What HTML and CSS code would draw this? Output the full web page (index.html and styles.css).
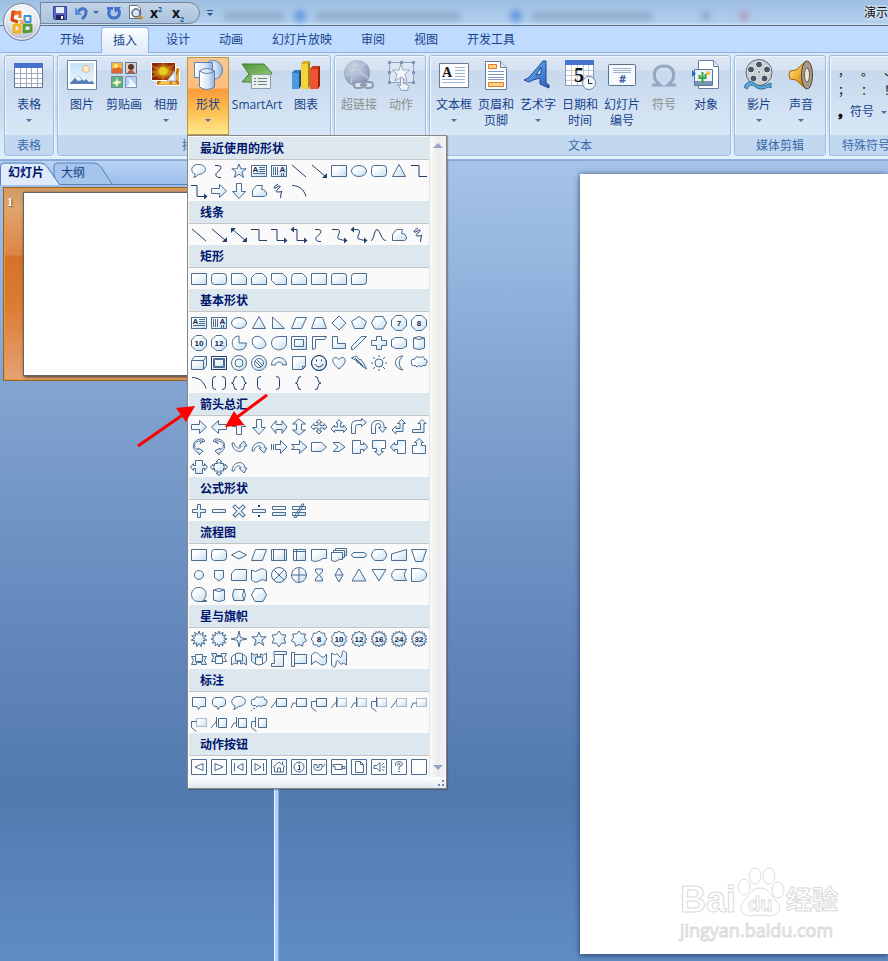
FILE: index.html
```html
<!DOCTYPE html>
<html lang="zh-CN">
<head>
<meta charset="utf-8">
<title>演示文稿</title>
<link rel="stylesheet" href="styles.css">
</head>
<body>
<svg class="defs" width="0" height="0" aria-hidden="true">
  <defs>
    <linearGradient id="tint" x1="0" y1="0" x2="1" y2="1"><stop offset=".3" stop-color="#fdfeff"/><stop offset="1" stop-color="#c3ddf0"/></linearGradient>
    <linearGradient id="steel" x1="0" y1="0" x2="1" y2="0"><stop offset="0" stop-color="#fff"/><stop offset=".6" stop-color="#d5e4f5"/><stop offset="1" stop-color="#94b2da"/></linearGradient>
    <linearGradient id="sky" x1="0" y1="0" x2="0" y2="1"><stop offset="0" stop-color="#c3e3fb"/><stop offset="1" stop-color="#eaf6ff"/></linearGradient>
    <linearGradient id="green" x1="0" y1="0" x2="1" y2="1"><stop offset="0" stop-color="#55943f"/><stop offset="1" stop-color="#9bd078"/></linearGradient>
    <linearGradient id="gold" x1="0" y1="0" x2="1" y2="1"><stop offset="0" stop-color="#ffe9a0"/><stop offset=".5" stop-color="#efb335"/><stop offset="1" stop-color="#a86a10"/></linearGradient>
    <linearGradient id="blue" x1="0" y1="0" x2="1" y2="1"><stop offset="0" stop-color="#7cb6f4"/><stop offset="1" stop-color="#2560bd"/></linearGradient>
    <radialGradient id="orb" cx=".5" cy=".3" r=".7"><stop offset="0" stop-color="#fff"/><stop offset=".6" stop-color="#e3e7ee"/><stop offset="1" stop-color="#a7b2c4"/></radialGradient>
    <radialGradient id="globe" cx=".4" cy=".3" r=".7"><stop offset="0" stop-color="#d5dcea"/><stop offset="1" stop-color="#8493b3"/></radialGradient>
    <radialGradient id="flower"><stop offset=".25" stop-color="#f3dc22"/><stop offset=".5" stop-color="#c87a14"/><stop offset="1" stop-color="#8e2508"/></radialGradient>
  </defs>
</svg>

<header class="titlebar">
  <button class="orb" aria-label="Office">
    <svg width="40" height="40" viewBox="0 0 40 40">
      <circle cx="20" cy="20" r="18.5" fill="url(#orb)" stroke="#7785a0"/>
      <circle cx="20" cy="20" r="17" fill="none" stroke="#fff"/>
      <g fill="none" stroke-width="3" stroke-linejoin="round">
        <path d="M17 11l-6-1-1 8 6 2" stroke="#d9430e"/><path d="M12 12l6-2v6" stroke="#ef7420"/>
        <path d="M22.500 18v-4h6v6h-5z" stroke="#3b8fd6" stroke-width="2"/>
        <path d="M12 23h6v7h-6z" stroke="#f2b21b"/>
        <path d="M22 23h7v6l-7 1z" stroke="#5a9a3a"/>
        <path d="M18 18l4 4m0-4l-4 4" stroke="#f39a4d" stroke-width="2" stroke-dasharray="2 1"/>
      </g>
    </svg>
  </button>
  <nav class="quick" aria-label="快速访问工具栏">
    <button aria-label="保存"><svg width="16" height="16" viewBox="0 0 16 16"><path d="M1.500 1.500h13v13h-12l-1-1z" fill="#5d63c4" stroke="#37409b"/><path d="M4 2h8v6H4z" fill="#e4eefb"/><path d="M4 10h8v5H4z" fill="#24265e"/><path d="M9 11h2v3H9z" fill="#fff"/></svg></button>
    <button aria-label="撤消"><svg width="26" height="16" viewBox="0 0 26 16"><path d="M4 7c3-5 9-4 8 1 0 3-2 4-4 6" fill="none" stroke="#4672c8" stroke-width="3"/><path d="M1 2v8h7z" fill="#5e8cda"/><path d="M19 6h6l-3 3z" fill="#3768a8"/></svg></button>
    <button aria-label="重复"><svg width="16" height="16" viewBox="0 0 16 16"><path d="M4 5C1 9 4 13 8 13c5 0 7-5 4-9" fill="none" stroke="#3f72cc" stroke-width="3"/><path d="M8 2h7L9 8zM1 2h6v3H1z" fill="#3f72cc"/></svg></button>
    <button aria-label="打印预览"><svg width="16" height="16" viewBox="0 0 16 16"><path d="M1.500.5h8l3 3v10h-11z" fill="#fff" stroke="#68717f"/><circle cx="8" cy="8" r="4" fill="#cfe7f8" stroke="#59636f" stroke-width="1.500"/><path d="M11 11l3 3" stroke="#d28a1c" stroke-width="3"/></svg></button>
    <button class="script" aria-label="上标">x<sup>2</sup></button>
    <button class="script" aria-label="下标">x<sub>2</sub></button>
  </nav>
  <button class="more" aria-label="自定义"><svg width="8" height="8" viewBox="0 0 8 8"><path d="M1 1.500h6" stroke="#2b4f86"/><path d="M1 4h6L4 7z" fill="#2b4f86"/></svg></button>
  <div class="backdrop" aria-hidden="true"><i class="smear"></i><i class="dot"></i><i class="smear long"></i><i class="dot"></i><i class="smear"></i><i class="tick"></i><i class="tick red"></i></div>
  <h1 class="doc">演示文稿</h1>
</header>

<nav class="tabs">
  <button>开始</button><button class="on">插入</button><button>设计</button><button>动画</button><button>幻灯片放映</button><button>审阅</button><button>视图</button><button>开发工具</button>
</nav>

<section class="ribbon">
  <div class="group">
    <div class="tools">
      <button class="tool"><svg class="ico" viewBox="0 0 32 32"><path d="M1.500 4.500h28v24h-28z" fill="#fff" stroke="#5f7594"/><path d="M1 4h29v5H1z" fill="#4471cf"/><path d="M2 14.500h27M2 19.500h27M2 24.500h27M7.500 9v19M13.500 9v19M18.500 9v19M24.500 9v19" stroke="#a0acbe"/></svg><span>表格</span><i class="caret"></i></button>
    </div>
    <h2>表格</h2>
  </div>
  <div class="group">
    <div class="tools">
      <button class="tool"><svg class="ico" viewBox="0 0 32 32"><path d="M1.500 1.500h29v29h-29z" fill="#fff" stroke="#6580a4"/><path d="M4 4h24v20H4z" fill="url(#sky)"/><circle cx="20" cy="10" r="3.500" fill="#fff0ce" stroke="#f3a775"/><path d="M4 24l8-8 6 6 4-4 6 6v1H4z" fill="#557fb4"/><path d="M9 19l3-3 4 5-4 1zM20 20l2-2 4 4-3 1z" fill="#eaf3fc"/></svg><span>图片</span></button>
      <button class="tool"><svg class="ico" viewBox="0 0 32 32"><path d="M3.500 3.500h11v11h-11z" fill="#f8b640" stroke="#8a9ab4"/><path d="M4 10l6-2 4 2v4H4z" fill="#e4672a"/><circle cx="8" cy="7" r="2" fill="#fff27a"/><path d="M17.500 3.500h11v11h-11z" fill="#dcd5cd" stroke="#66758b"/><circle cx="23" cy="8" r="3" fill="#5f3426"/><path d="M19 14q4-6 8 0z" fill="#c35232"/><path d="M3.500 17.500h11v11h-11z" fill="#5cb586" stroke="#6d8f8c"/><path d="M9 18l1 4 4 1-4 2-1 3-2-3-3-1 4-2z" fill="#fbf7b5"/><path d="M17.500 17.500h11v11h-11z" fill="#b5d1f3" stroke="#7e93b9"/><path d="M20 18l8 8v2H18l4-4z" fill="#eff6ff"/></svg><span>剪贴画</span></button>
      <button class="tool"><svg class="ico" viewBox="0 0 32 32"><path d="M6.500 8.500h23v18h-23z" fill="#e2a33d" stroke="#fff"/><path d="M7 25L18 14l11 11M20 25l9-15" stroke="#c06a18" stroke-width="2" fill="#f1c65c"/><path d="M1.500 3.500h24v18h-24z" fill="url(#flower)" stroke="#fff"/><path d="M13 4v17M2 7l22 11M2 18L24 6M2 13h22" stroke="#d18c22"/><circle cx="13" cy="12" r="4" fill="#e6cf18"/><path d="M25 12l-8 10h8z" fill="#eef1f5" stroke="#a5abb5"/></svg><span>相册</span><i class="caret"></i></button>
      <div class="drop">
        <button class="tool active" aria-expanded="true"><svg class="ico" viewBox="0 0 32 32"><circle cx="21" cy="11" r="9.500" fill="url(#steel)" stroke="#5b81b5"/><path d="M2.500 3.500h18v15h-18z" fill="url(#steel)" stroke="#5b81b5"/><path d="M7.500 12q7.500-5 15 0v16q-7.500 5-15 0z" fill="url(#steel)" stroke="#5b81b5"/><path d="M7.500 12q7.500 5 15 0" fill="none" stroke="#5b81b5"/></svg><span>形状</span><i class="caret"></i></button>
        <div class="menu">
          <div class="list">
            <h3>最近使用的形状</h3><div class="grid" data-set="recent"></div>
            <h3>线条</h3><div class="grid" data-set="lines"></div>
            <h3>矩形</h3><div class="grid" data-set="rects"></div>
            <h3>基本形状</h3><div class="grid" data-set="basic"></div>
            <h3>箭头总汇</h3><div class="grid" data-set="arrows"></div>
            <h3>公式形状</h3><div class="grid" data-set="math"></div>
            <h3>流程图</h3><div class="grid" data-set="flow"></div>
            <h3>星与旗帜</h3><div class="grid" data-set="stars"></div>
            <h3>标注</h3><div class="grid" data-set="callouts"></div>
            <h3>动作按钮</h3><div class="grid" data-set="actions"></div>
          </div>
          <div class="scroll"><button class="up" aria-label="向上"></button><button class="down" aria-label="向下"></button></div>
          <div class="grip"><svg width="8" height="8" viewBox="0 0 8 8" fill="#6f88b5"><path d="M5 1h2v2H5zM5 5h2v2H5zM1 5h2v2H1z"/></svg></div>
          <svg class="marks" width="132" height="56" viewBox="0 0 132 56" aria-hidden="true"><g stroke="#fe0000" stroke-width="3"><path d="M1 53L47 21M130 2L99 25"/></g><g fill="#fe0000"><path d="M58 13L49 29 39 15zM88 34L97 18 107 32z"/></g></svg>
        </div>
      </div>
      <button class="tool smart"><svg class="ico" viewBox="0 0 32 32"><path d="M1 5h22l8 9-7 9H1l7-8z" fill="url(#green)" stroke="#427f35"/><path d="M10.500 15.500h19v14h-19z" fill="#eef4f2" fill-opacity=".9" stroke="#8d9dae"/><path d="M13 19.500h2m2 0h9M13 22.500h2m2 0h9M13 25.500h2m2 0h9" stroke="#6b8294"/></svg><span>SmartArt</span></button>
      <button class="tool"><svg class="ico" viewBox="0 0 32 32"><path d="M2 14l3-3h6v16l-2 3H2z" fill="#1c477f"/><path d="M2 14h7v16H2z" fill="#4a9ade"/><path d="M2 14l3-3h6l-2 3z" fill="#2e79c2"/><path d="M11 5l3-3h6v25l-2 3h-7z" fill="#a8820c"/><path d="M11 5h7v25h-7z" fill="#f5d33a"/><path d="M11 5l3-3h6l-2 3z" fill="#d5b024"/><path d="M20 10l3-3h7v20l-2 3h-8z" fill="#9a1e08"/><path d="M20 10h8v20h-8z" fill="#ed5433"/><path d="M20 10l3-3h7l-2 3z" fill="#c83b1c"/></svg><span>图表</span></button>
    </div>
    <h2>插图</h2>
  </div>
  <div class="group">
    <div class="tools">
      <button class="tool" disabled><svg class="ico" viewBox="0 0 32 32"><circle cx="14" cy="14" r="13" fill="url(#globe)"/><path d="M4 8q10 2 18-3M8 24q0-12 13-20M3 17q12-8 22 2" fill="none" stroke="#b9c4d8" stroke-width="2"/><g fill="none" stroke="#8e9ab2" stroke-width="2"><rect x="11" y="23" width="9" height="6" rx="3" fill="#dbe3ef"/><rect x="21" y="23" width="9" height="6" rx="3" fill="#dbe3ef"/><path d="M17 26h7"/></g></svg><span>超链接</span></button>
      <button class="tool" disabled><svg class="ico" viewBox="0 0 32 32"><path d="M4.500 3.500h24v20h-24z" fill="#dde6f3" stroke="#93a2bd"/><path d="M16 5l2 6h7l-5 4 2 7-6-4-6 4 2-7-5-4h7z" fill="#f1f5fa" stroke="#9aa9c0"/><path d="M3 2h3v3H3zM15 2h3v3h-3zM27 2h3v3h-3zM3 12h3v3H3zM27 12h3v3h-3zM3 22h3v3H3zM27 22h3v3h-3z" fill="#8495b7"/><path d="M15.500 19.500q1.500-2 3 0v5l4 1 1 2-1 4h-6l-4-6 3 1z" fill="#edf1f7" stroke="#91a0b8"/></svg><span>动作</span></button>
    </div>
    <h2>链接</h2>
  </div>
  <div class="group">
    <div class="tools">
      <button class="tool"><svg class="ico" viewBox="0 0 32 32"><path d="M1.500 4.500h29v24h-29z" fill="#fff" stroke="#6c7c94"/><path d="M17 8.500h10M17 11.500h10M17 14.500h10M17 17.500h10M4 20.500h23M4 23.500h23" stroke="#9fb4d8"/><text x="4" y="18" class="serif" font-size="14">A</text></svg><span>文本框</span><i class="caret"></i></button>
      <button class="tool"><svg class="ico" viewBox="0 0 32 32"><path d="M5.500 2.500h15l6 6v22h-21z" fill="#fff" stroke="#677e9e"/><path d="M20.500 2.500v6h6" fill="#dfe9f6" stroke="#677e9e"/><path d="M8.500 5.500h8v4h-8zM8.500 23.500h15v4h-15z" fill="#ffd691" stroke="#e67817"/><path d="M8 12.500h16M8 15.500h16M8 18.500h16M8 20.500h16" stroke="#8299c2"/></svg><span>页眉和<br>页脚</span></button>
      <button class="tool"><svg class="ico" viewBox="0 0 32 32"><path d="M2 21q4-1 8-6L21 2h3l0 22 3 2v3l-9-4V19l-7 2-4 2zM14 16l5-1V8z" fill="url(#blue)" fill-rule="evenodd" stroke="#1d4a94"/></svg><span>艺术字</span><i class="caret"></i></button>
      <button class="tool"><svg class="ico" viewBox="0 0 32 32"><path d="M1.500 2.500h28v24h-28z" fill="#fff" stroke="#8a9ab6"/><path d="M1 1h29v5H1z" fill="#4774d1"/><path d="M2 11.500h27M2 16.500h27M2 21.500h27M7.500 6v20M13.500 6v20M19.500 6v20M24.500 6v20" stroke="#c3cbd8"/><text x="10" y="23" class="serif" font-size="20">5</text><circle cx="25" cy="24" r="6.500" fill="#f4f9ff" stroke="#6e7f99"/><path d="M24.500 20v4.500h4" fill="none" stroke="#222"/></svg><span>日期和<br>时间</span></button>
      <button class="tool"><svg class="ico" viewBox="0 0 32 32"><rect x="2.500" y="5.500" width="27" height="21" rx="1" fill="#f6f9fd" stroke="#5d7089"/><path d="M7 9.500h18M7 11.500h18M7 13.500h18" stroke="#a6b3c8"/><text x="13" y="24" font-size="11" font-weight="bold" fill="#3a5fa5">#</text></svg><span>幻灯片<br>编号</span></button>
      <button class="tool" disabled><svg class="ico" viewBox="0 0 32 32"><path d="M4 26h8c-9-7-7-19 4-19s13 12 4 19h8" fill="none" stroke="#94a4c1" stroke-width="3"/></svg><span>符号</span></button>
      <button class="tool"><svg class="ico" viewBox="0 0 32 32"><path d="M8.500 1.500h15l5 6v22h-20z" fill="#fff" stroke="#677e9e"/><path d="M23.500 1.500v6h5" fill="#dfe9f6" stroke="#677e9e"/><path d="M4.500 10.500h18v16h-18z" fill="#e9f3fb" stroke="#54779e"/><path d="M5 22h17v4H5z" fill="#7895b5"/><circle cx="18" cy="14" r="2" fill="#f3bc34"/><path d="M2 11v7l4-3.500z" fill="#276bc9"/><path d="M12.500 24V13M9.500 16v3h6v-4" fill="none" stroke="#35a03c" stroke-width="2"/></svg><span>对象</span></button>
    </div>
    <h2>文本</h2>
  </div>
  <div class="group">
    <div class="tools">
      <button class="tool"><svg class="ico" viewBox="0 0 32 32"><circle cx="16" cy="13.500" r="13" fill="#c9ced5" stroke="#5e6672"/><g fill="#485564" stroke="#f1f3f5"><circle cx="16" cy="5.500" r="3.500"/><circle cx="24" cy="10.500" r="3.500"/><circle cx="21.500" cy="19.500" r="3.500"/><circle cx="10.500" cy="19.500" r="3.500"/><circle cx="8" cy="10.500" r="3.500"/><circle cx="16" cy="13" r="1.500"/></g><path d="M1 28q4-8 10-4t9 3 8-3v5q-3-2-5 0-6 3-12-2-4-3-7 3z" fill="#5baad9" stroke="#2b709e"/></svg><span>影片</span><i class="caret"></i></button>
      <button class="tool"><svg class="ico" viewBox="0 0 32 32"><path d="M5 12l6-1 10-9q-4 14 0 28l-10-9-6-1q-2-4 0-8z" fill="url(#gold)" stroke="#9d6511"/><ellipse cx="22" cy="16" rx="5.500" ry="14" fill="#a59a8b" stroke="#564734"/><ellipse cx="22" cy="16" rx="2.500" ry="7" fill="#eee5d3" stroke="#6d5f4b"/></svg><span>声音</span><i class="caret"></i></button>
    </div>
    <h2>媒体剪辑</h2>
  </div>
  <div class="group special">
    <div class="tools marksgrid">
      <button>，</button><button>。</button><button>、</button>
      <button>；</button><button>：</button><button>！</button>
      <button class="sym"><b>❟</b>符号<i class="caret"></i></button>
    </div>
    <h2>特殊符号</h2>
  </div>
</section>

<main class="work">
  <aside class="pane">
    <div class="panetabs">
      <svg class="edges" width="274" height="24" viewBox="0 0 274 24" aria-hidden="true"><path d="M54 23V5q0-3 4-3h36q4 0 7 4l11 17" fill="#a5c5ed" stroke="#5583bd"/><path d="M0.500 24V5q0-3 4-3h36q4 0 7 4l12 17.500h214" fill="none" stroke="#5583bd"/><path d="M1 24V6q0-3 4-3h35q4 0 7 4l12 17z" fill="#dfeafa"/></svg>
      <button class="sel">幻灯片</button><button>大纲</button>
    </div>
    <div class="thumb"><span>1</span><div class="mini"></div></div>
  </aside>
  <div class="divider"></div>
  <section class="stage">
    <article class="slide">
      <div class="watermark">
        <div class="brand"><span>Bai</span><svg width="50" height="54" viewBox="0 0 50 54" fill="#fff" stroke="#dcdcdc"><ellipse cx="8" cy="21" rx="6" ry="8"/><ellipse cx="19" cy="10" rx="6" ry="8"/><ellipse cx="33" cy="10" rx="6" ry="8"/><ellipse cx="42" cy="24" rx="6" ry="8"/><path d="M24 22C15 22 13 31 7 36C2 43 6 50 15 50Q24 48 33 50C43 50 47 42 41 36C35 30 33 22 24 22z"/><text x="12" y="45" font-size="20">du</text></svg><span class="cn">经验</span></div>
        <p>jingyan.baidu.com</p>
      </div>
    </article>
  </section>
</main>
<script src="shapes.js"></script>
</body>
</html>
```
FILE: styles.css
```css
* { box-sizing: border-box; }

body {
  margin: 0;
  min-height: 100vh;
  display: flex;
  flex-direction: column;
  overflow: hidden;
  font: 12px/16px "Open Sans", "Noto Sans CJK SC", sans-serif;
  color: #15428b;
}

button {
  margin: 0;
  padding: 0;
  border: 0;
  background: none;
  font: inherit;
  color: inherit;
}

h1, h2, h3, p { margin: 0; font: inherit; }
svg { display: block; }
.defs { position: absolute; }
.serif { font-family: "Liberation Serif", serif; font-weight: bold; fill: #111; }

/* Title bar */
.titlebar {
  position: relative;
  display: flex;
  align-items: center;
  height: 26px;
  border-bottom: 1px solid #566d86;
  background: linear-gradient(#9ebfe2, #b1cfed 90%, #d5e6f6);
}
.orb {
  position: absolute;
  left: 2px;
  top: 2px;
  z-index: 2;
  border-radius: 50%;
}
.quick {
  display: flex;
  align-items: center;
  gap: 6px;
  height: 22px;
  margin-left: 40px;
  padding: 0 11px;
  border: 1px solid #73869d;
  border-radius: 0 12px 12px 0;
  background: linear-gradient(#c2d3e6, #a9c3df);
}
.script {
  width: 16px;
  text-align: left;
  font: bold 14px/16px "Open Sans", sans-serif;
  color: #111;
}
.script sup, .script sub { font-size: 7px; line-height: 1px; color: #2055a0; }
.more { margin: 0 10px 0 6px; }
.backdrop {
  flex: 1;
  display: flex;
  align-items: center;
  gap: 10px;
  height: 100%;
  padding-top: 6px;
  filter: blur(3px);
}
.smear { width: 120px; height: 8px; background: #718fae; opacity: .5; }
.smear:first-child { width: 60px; }
.smear.long { width: 144px; margin-right: 40px; }
.dot { width: 12px; height: 12px; border-radius: 50%; background: #4f8ad8; opacity: .8; }
.tick { width: 8px; height: 8px; background: #6f8dad; opacity: .6; margin-left: 40px; }
.tick.red { background: #b8708c; margin-left: 20px; }
.doc {
  width: 24px;
  overflow: hidden;
  white-space: nowrap;
  color: #111;
  text-shadow: 0 0 5px #fff, 0 0 5px #fff;
}

/* Ribbon tabs */
.tabs {
  display: flex;
  align-items: flex-end;
  gap: 5px;
  height: 27px;
  padding-left: 48px;
  border-bottom: 1px solid #8db2e3;
  background: #bfdbff;
}
.tabs button { height: 24px; padding: 0 12px; white-space: nowrap; }
.tabs .on {
  height: 26px;
  margin-bottom: -1px;
  padding: 0 11px;
  border: 1px solid #8db2e3;
  border-bottom: 0;
  border-radius: 3px 3px 0 0;
  background: linear-gradient(#fbfdff, #dfe9f5);
}

/* Ribbon */
.ribbon {
  position: relative;
  z-index: 1;
  display: flex;
  gap: 3px;
  padding: 2px 0 3px 4px;
  border-bottom: 1px solid #8fb0d8;
  background: linear-gradient(#dfe9f6, #cfdff1 16px, #c9daee 60px, #e1f2fd);
}
.group {
  flex: none;
  display: flex;
  flex-direction: column;
  border: 1px solid #9dbde0;
  border-radius: 3px;
  box-shadow: inset 1px 1px #edf5fd, 1px 1px #edf5fd;
  background: linear-gradient(#dee8f5, #d4e1f1 14px, #c7d8ed 15px, #d9e8f6 80px);
}
.tools { display: flex; height: 79px; padding: 1px 3px 0; }
.group h2 {
  height: 20px;
  line-height: 22px;
  text-align: center;
  white-space: nowrap;
  color: #3e6aaa;
  background: #c1d8f0;
}
.tool {
  width: 42px;
  height: 78px;
  padding-top: 2px;
  display: flex;
  flex-direction: column;
  align-items: center;
  white-space: nowrap;
}
.smart { width: 56px; }
.tool:disabled { color: #8d8d8d; }
.ico { width: 32px; height: 32px; margin-bottom: 6px; }
.caret {
  width: 0;
  margin-top: 6px;
  border: 3px solid transparent;
  border-top-color: #4b6fa8;
  border-bottom: 0;
}
.tool.active {
  border: 1px solid #c2953a;
  padding-top: 1px;
  background: linear-gradient(#f6c896, #fdbd7a 30px, #f99a3a 31px, #fdc355 55px, #ffe88f);
}
.special { flex: 1; min-width: 0; overflow: hidden; border-right: 0; border-radius: 3px 0 0 3px; }
.special h2 { padding-left: 12px; text-align: left; }
.marksgrid {
  display: grid;
  grid-template-columns: repeat(3, 23px);
  grid-template-rows: 20px 18px 24px;
  padding: 6px 0 0 8px;
  color: #111;
}
.marksgrid button { text-align: left; }
.marksgrid .sym { display: flex; align-items: center; gap: 7px; white-space: nowrap; color: #15428b; }
.sym b { color: #000; }
.sym .caret { margin: 0; }

/* Shape gallery */
.drop { position: relative; }
.menu {
  position: absolute;
  left: 0;
  top: 78px;
  z-index: 5;
  display: grid;
  grid-template-columns: 240px 17px;
  border: 1px solid #868686;
  padding-left: 1px;
  background: #fafafa;
  box-shadow: 1px 1px 1px rgba(60, 60, 60, .4);
}
.list { padding-top: 1px; }
.menu h3 {
  height: 23px;
  padding-left: 11px;
  line-height: 23px;
  border-bottom: 1px solid #c5c5c5;
  font-weight: bold;
  color: #00156e;
  background: #dde7ee;
}
.grid {
  display: grid;
  grid-template-columns: repeat(12, 20px);
  grid-auto-rows: 20px;
  padding-top: 1px;
}
.grid svg { width: 20px; height: 20px; }
.grid text { font: bold 8px "Liberation Sans", sans-serif; text-anchor: middle; fill: #12294b; }
.grid .fill { fill: url(#tint); stroke: #4a6c91; }
.grid .line { fill: none; stroke: #23406b; }
.grid .mid { fill: none; stroke: #4a6c91; }
.grid .dash { fill: url(#tint); stroke: #5c7da6; stroke-dasharray: 1 1; }
.grid .solid { fill: #23406b; }
.grid .plain { fill: #fdfdfd; stroke: #4a6c91; }
.scroll {
  display: flex;
  flex-direction: column;
  justify-content: space-between;
  padding: 7px 3px;
  border-left: 1px solid #e4e4e4;
  background: linear-gradient(90deg, #fafafa, #ececec 50%, #f2f2f2);
}
.scroll button { width: 0; border: 5px solid transparent; }
.scroll .up { border-top: 0; border-bottom-color: #98a3cc; }
.scroll .down { border-bottom: 0; border-top-color: #98a3cc; }
.grip {
  grid-column: 1 / -1;
  display: flex;
  justify-content: flex-end;
  align-items: center;
  height: 11px;
  padding-right: 1px;
  background: linear-gradient(#fff, #dfe8ef);
}
.marks { position: absolute; left: -51px; top: 257px; }

/* Work area */
.work {
  flex: 1;
  display: flex;
  border-top: 1px solid #8ba7cf;
  background: linear-gradient(#a5c3eb, #85a6d2 26%, #7195c5 44%, #6185bb 62%, #517aae 79%, #608cc6);
}
.pane { position: relative; flex: 0 0 274px; }
.panetabs {
  position: relative;
  display: flex;
  gap: 17px;
  height: 24px;
  padding-left: 8px;
  background: linear-gradient(#b9d3f4, #9bbde9);
}
.edges { position: absolute; left: 0; top: 0; }
.panetabs button { position: relative; height: 24px; }
.panetabs .sel { font-weight: bold; color: #00156e; }
.thumb {
  display: flex;
  gap: 10px;
  margin: 2px 0 0 3px;
  height: 194px;
  padding: 4px 8px 4px 3px;
  border: 1px solid #8c6537;
  box-shadow: inset 0 0 0 1px #e99a35;
  background: linear-gradient(#cf9a68, #e0a46d 20px, #df8444 67px, #d67127 68px, #dd7c35 120px, #e6a273);
  font: bold 12px/20px "Liberation Serif", serif;
  color: #fff;
  text-shadow: 1px 1px 1px #553;
}
.mini { flex: 1; border: 1px solid #646464; background: #fff; box-shadow: 1px 1px 3px #333; }
.divider { flex: 0 0 5px; border-left: 1px solid #edf6ff; border-right: 1px solid #83a6d4; background: #abcfff; }
.stage { flex: 1; display: flex; padding: 13px 0 7px 301px; }
.slide {
  flex: 1;
  display: flex;
  justify-content: flex-end;
  align-items: flex-end;
  padding: 0 50px 14px 0;
  background: #fff;
  box-shadow: 0 1px 6px #263e60;
}
.watermark { font-family: "Liberation Sans", "Noto Sans CJK SC", sans-serif; color: #fff; }
.watermark span, .watermark text, .watermark p { -webkit-text-stroke: 1px #dadada; }
.brand { display: flex; align-items: flex-end; height: 54px; font: bold 36px/40px "Liberation Sans", sans-serif; }
.brand .cn { font: bold 26px/44px "Noto Sans CJK SC", sans-serif; }
.watermark p { font: 18px/20px "Open Sans", sans-serif; }
```
FILE: shapes.js
```js
// Shape icons are drawn on a 20 x 20 cell.
const tag = (cls) => (d) => `<path class="${cls}" d="${d}"/>`;
const f = tag('fill'), l = tag('line'), m = tag('mid'), s = tag('solid'), q = tag('dash'), w = tag('plain');
const rot = (a, x) => `<g transform="rotate(${a} 10 10)">${x}</g>`;
const flip = (x) => `<g transform="matrix(-1 0 0 1 20 0)">${x}</g>`;
const t = (x, y = 13) => `<text x="10" y="${y}">${x}</text>`;
const oval = (rx, ry = rx, cx = 10, cy = 10) => `M${cx - rx} ${cy}a${rx} ${ry} 0 1 0 ${2 * rx} 0a${rx} ${ry} 0 1 0 ${-2 * rx} 0z`;
const star = (n, r1, r2, turn = -90) => {
  const pts = [];
  for (let i = 0; i < n * 2; i++) {
    const r = i % 2 ? r2 : r1, a = (turn + i * 180 / n) * Math.PI / 180;
    pts.push((10 + r * Math.cos(a)).toFixed(1) + ' ' + (10 + r * Math.sin(a)).toFixed(1));
  }
  return 'M' + pts.join('L') + 'z';
};

const rect = f('M2.500 4.500h15v11h-15z');
const round = f('M5.500 4.500h9q3 0 3 3v5q0 3-3 3h-9q-3 0-3-3v-5q0-3 3-3z');
const ellipse = f(oval(7.5, 5.5));
const bubble = f('M6 13C1 11 1.500 3.500 9.500 3.500C19 3.500 18.500 13 9.500 13.500Q8 15.500 4.500 16.500Q6.500 15 6 13z');
const curve = 'M6 4.500h3q3 0 3 2t-3 4-2 4 3 2h2';
const star5 = f('M10 3l1.800 4.800h5.400l-4.300 3.200 1.800 5.500-4.700-3.400-4.700 3.400 1.800-5.500-4.300-3.200h5.400z');
const page = m('M2.500 4.500h15v11h-15z');
const textH = rect + m('M10 6.500h6M10 8.500h6M10 10.500h6M4 12.500h12') + page + '<text x="6.500" y="11">A</text>';
const textV = rect + m('M4.500 6v8M6.500 6v8M8.500 6v8M12.500 12v3M14.500 12v3') + page + '<text x="13.500" y="11">A</text>';
const line = l('M3 4l14 12');
const diagHead = s('M18 17h-5l5-5z');
const lineArrow = l('M3 4l13 11') + diagHead;
const lineBoth = lineArrow + s('M2 3h5l-5 5z');
const elbow = l('M2 4.500h8v11h8');
const headR = s('M15 12.500l3.500 3-3.500 3z'), headL = s('M5 1.500l-3.500 3 3.500 3z');
const elbowA = l('M2 4.500h6v11h8') + headR;
const elbowB = l('M4 4.500h4v11h8') + headL + headR;
const bend = 'M3 4.500h4q5 0 3 4t-1 5 7 2';
const curveA = l(bend) + headR, curveB = curveA + headL;
const wave = l('M2 15.500c3 0 3-11 6-11s4 11 9 11');
const free = f('M3.500 15.500v-6l4-5h6l-1 4 3 .5 2 3v2l-2 1.500z');
const scribble = l('M9 3q-5 3-4 4t5-2q3 0-1 3t0 3 4-1-1 3 0 4');
const arc = l('M3 4.500c7 0 12 4 14 11');
const tri = f('M10 3.500l6.500 12h-13z');
const right = f('M2.500 7.500h8v-4l7 6.500-7 6.500v-4h-8z');
const num = (x) => f('M7 2.500h6l4.500 4.500v6l-4.500 4.500h-6l-4.500-4.500v-6z') + t(x);
const plus = f('M7.500 3.500h5v4h5v5h-5v4h-5v-4h-5v-5h5z');
const can = f('M4.500 5v10q5.500 3 11 0V5q-5.500-3-11 0z') + m('M4.500 5q5.500 3 11 0');
const crossArrow = 'M10 2.500l3 3h-2v3h4v-2l3 3.500-3 3v-2h-4v3h2l-3 3-3-3h2v-3h-4v2l-3-3 3-3.500v2h4v-3h-2z';
const upTurn = f('M2.500 16.500v-8q0-5 6-5h4v-2l5 4-5 4v-2h-4q-2 0-2 3v6z');
const uTurn = f('M2.500 16.500v-7q0-6 6-6t6.500 5v2h2.500l-4 5-4-5h2v-2q0-2-2.500-2t-2.500 3v7z');
const leftUp = f('M3 13l4-4v2.500h4v-5h-2.500l4-4 4 4H14v8H7v2.500z');
const bentUp = f('M3.500 12.500h8v-6h-2.500l4-4 4 4h-2v9h-11.500z');
const hook = f('M14 4c-9-1-11 6-5 9v-2l5 3-4 4v-2C1 13 3 1 14 2l2 2-5 2v1z');
const swoop = f('M3 14c0-9 12-12 13-3h2l-3 5-5-5h2c-1-4-6-2-7 3z');
const boxArrow = f('M3.500 3.500h8v4h3v-2l4 4.500-4 4.500v-2h-3v4h-8z');
const box = w('M2.500 2.500h15v15h-15z');
const spikes = (n, x) => f(star(n, 8, 6)) + t(x);
const banner = f('M2.500 7.500h4v-2h7v2h4l-2 4 2 4h-5v-2h-5v2h-5l2-4z') + m('M6.500 7.500v5h7v-5');
const bannerArc = f('M2.500 8q7.500-8 15 0v8l-3-2-3 1v-3h-3v3l-3-1-3 2z') + m('M6.500 5v7h7V5');
const frameCall = (edge, lead, cls = f) => cls(edge) + m(lead);

const sets = {
  recent: [bubble, l(curve), star5, textH, textV, line, lineArrow, rect, ellipse, round, tri, elbow,
    elbowA, right, rot(90, right), free, scribble, arc],
  lines: [line, lineArrow, lineBoth, elbow, elbowA, elbowB, l(curve), curveA, curveB, wave, free, scribble],
  rects: [rect, round, f('M2.500 4.500h11l4 4v7h-15z'), f('M6.500 4.500h7l4 4v7h-15v-7z'), f('M2.500 4.500h11l4 4v7h-11l-4-4z'),
    f('M6 4.500h7.500l4 4v7h-15v-7q0-4 3.500-4z'), rect, f('M5 4.500h10q2.500 0 2.500 2.500v8.500h-15v-8.500q0-2.500 2.500-2.500z'), f('M5 4.500h12.500v8q0 3-3 3h-12v-8q0-3 2.500-3z')],
  basic: [textH, textV, ellipse, tri, f('M3.500 4v11.500h12z'), f('M7 4.500h10.500l-5 11h-10z'), f('M6.500 4.500h7l4 11h-15z'), f('M10 3l7 7-7 7-7-7z'),
    f('M10 3.500l7.500 5-3 7h-9l-3-7z'), f('M6 3.500h8l3.500 6.500-3.500 6h-8l-3.500-6z'), num(7), num(8),
    num(10), num(12), f('M10 10V3C1 3 1 17 10 17q7 0 7.500-7z'), f('M4 5c5-5 13 2 13 7-5 8-17 2-13-7z'), f('M10 3.500h7.500v7C17 19 2.500 19 2.500 10q0-6 7.500-6.500z'),
    f('M2.500 3.500h15v13h-15z') + f('M5.500 6.500h9v7h-9z'), f('M3.500 3.500h14l-2 3h-9v9l-3 1z'), f('M3.500 3.500h5v7h8v5h-13z'), f('M2.500 16.500v-3l10-10h5l-13 13z'), plus,
    f('M6 4.500h8q1 2 3.500 2v7q-2.500 0-3.500 2h-8q-1-2-3.500-2v-7q2.500 0 3.500-2z'), can,
    f('M2.500 7.500l3-4h12v9l-3 4h-12z') + m('M3 7.500h11.500v8.500m0-8.500l3-4'), f('M2.500 3.500h15v13h-15z') + m('M4.500 5.500h11v9h-11z') + l('M2.500 3.500h15v13h-15z') + m('M5.500 6.500h9v7h-9z'),
    f(oval(7.5)) + m(oval(4)), f(oval(7.5)) + m(oval(4.5) + 'M7 6l7 7M6 8l6 6'), f('M2.500 12c0-10 15-10 15 0h-4c0-4-7-4-7 0z'), f('M3.500 3.500h13v10l-3 3h-10z') + m('M13.500 16v-2.500h3'),
    f(oval(7.5)) + l(oval(7.5) + 'M5.500 11q4.500 6 9 0M7.500 6.500v2M12.500 6.500v2'), f('M10 16C-1 8 5 1 10 6.500C15 1 21 8 10 16z'), f('M2.500 5l5-2 3 4 1-1 3 4 3 6-6-4v-1l-4-2 1-1z') + l('M6 5l8 8'),
    f(oval(4)) + m('M10 2v2M10 16v2M2 10h2M16 10h2M4 4l2 2M14 14l2 2M4 16l2-2M14 6l2-2'), f('M14 3c-10 0-10 13 0 14-5-4-5-10 0-14z'),
    f('M6 12.500q-4 1-3.500-3-1-4 3-3 1-4 5-2 5-2 5 2 4 0 2 4 0 3-4 2-1 3-3 0-3 3-4.500 0z'),
    arc, l('M7 3.500q-3.500 0-3.500 3v7q0 3 3.500 3M13 3.500q3.500 0 3.500 3v7q0 3-3.500 3'), l('M8 3.500q-3 0-3 3t-2.500 3.500q2.500 0 2.500 3.500t3 3M12 3.500q3 0 3 3t2.500 3.500q-2.500 0-2.500 3.500t-3 3'),
    l('M12 3.500q-3.500 0-3.500 3v7q0 3 3.500 3'), l('M7 3.500q3.500 0 3.500 3v7q0 3-3.500 3'), l('M12 3.500q-3 0-3 3t-2.500 3.500q2.500 0 2.500 3.500t3 3'), l('M6 3.500q3 0 3 3t3 3.500q-3 0-3 3.500t-3 3')],
  arrows: [right, rot(180, right), rot(-90, right), rot(90, right), f('M2 10l5-6.500v4h6v-4l5 6.500-5 6.500v-4h-6v4z'), rot(90, f('M2 10l5-6.500v4h6v-4l5 6.500-5 6.500v-4h-6v4z')),
    f(crossArrow), f('M10 2.500l3 3.500h-1.500v4h3v-2l3.500 4-3.500 3.500v-2h-9v2l-3.500-3.500 3.500-4v2h3v-4H7z'), upTurn, uTurn, leftUp, bentUp,
    hook, flip(hook), rot(180, flip(swoop)), swoop, f('M6.500 7.500h5v-4l6.500 6.500-6.500 6.500v-4h-5z') + m('M2.500 7v6M4.500 7v6'), f('M2.500 7.500h8v-4l7.500 6.500-7.500 6.500v-4h-8l3-2.500z'),
    f('M2.500 5.500h10l5 4.500-5 4.500h-10z'), f('M4 5.500h6l6 4.500-6 4.500H4l5-4.500z'), boxArrow, rot(90, boxArrow), rot(180, boxArrow), rot(-90, boxArrow),
    f('M6.500 3.500h7v5h2v-2l3 3.500-3 3.500v-2h-2v5h-7v-5h-2v2L1.500 10l3-3.500v2h2z'), f('M10 2l3 3h-2v1.500h3.500V9H16V7l2.500 3-2.500 3v-2h-1.500v3H11v2h2l-3 2.500L7 16h2v-2H5.500v-3H4v2l-2.500-3L4 7v2h1.500V6.500H9V5H7z'), swoop],
  math: [f('M8.500 3.500h3v5h5v3h-5v5h-3v-5h-5v-3h5z'), f('M3.500 8.500h13v3h-13z'), rot(45, f('M8.500 3h3v5.500H17v3h-5.500V17h-3v-5.500H3v-3h5.500z')), f('M3.500 8.500h13v3h-13z') + s('M9 4h2v2H9zM9 14h2v2H9z'),
    f('M3.500 5.500h13v3h-13zM3.500 11.500h13v3h-13z'), f('M3.500 5.500h13v3h-13zM3.500 11.500h13v3h-13zM5 16L13 3h2L7 17z')],
  flow: [rect, round, f('M2.500 10l7.500-4 7.500 4-7.500 4z'), f('M6.500 4.500h11l-4 11h-11z'), rect + m('M4.500 5v11M15.500 5v11'), f('M4.500 4.500h12v11h-12z') + m('M7.500 5v11M5 6.500h12'), f('M2.500 4.500h15v9q-4-1-7 2-5 2-8 0z'),
    f('M6.500 3.500h11v7h-11z') + f('M4.500 5.500h11v7h-11z') + f('M2.500 7.500h11v7q-3-1-5 1t-6 0z'), f('M5 7.500h10q5 2.500 0 5H5q-5-2.500 0-5z'), f('M6 4.500h8q3.500 2 3.500 5.500t-3.500 5.500h-8q-3.500-2-3.500-5.500t3.500-5.500z'), f('M2.500 9l15-4.500v11h-15z'), f('M2.500 4.500h15l-4 12h-7z'),
    f(oval(4.5)), f('M5.500 5.500h9v7l-4.500 3.500-4.500-3.500z'), f('M6 4.500h11.500v11h-15v-7z'), f('M2.500 5q4 3 7.500 0t7.500 1v10q-4-3-7.500 0t-7.500-1z'), f(oval(7.5)) + m('M5 5l10 10M15 5L5 15'), f(oval(7.5)) + m('M10 3v14M3 10h14'),
    f('M6.500 4h7v2l-3 4 3 4v2h-7v-2l3-4-3-4z'), f('M10 3l4 7-4 7-4-7z') + m('M6 10h8'), f('M10 4l7 12H3z'), f('M3 4.500h14L10 16z'), f('M6 4.500h11.500q-4 5 0 11H6q-7-5 0-11z'), f('M2.500 3.500h6c12 0 12 13 0 13h-6z'),
    f('M14 15.500h3.500v1H10c-10 0-10-14 0-14 8 0 9 9 4 13z'), can, rot(90, can), f('M6 3.500h8l3.500 6.500-3.500 6.500h-8l-3.500-6.500z')],
  stars: [f(star(11, 8, 4.5)), f(star(12, 8, 5)), f(star(4, 8, 2)), star5, f(star(6, 8, 5)), f(star(7, 8, 5.5)), f(star(8, 8, 6.5)) + t(8), f(star(10, 8, 6.5)) + t(10), spikes(12, 12), spikes(16, 16), spikes(16, 24), spikes(16, 32),
    banner, rot(180, banner), bannerArc, rot(180, bannerArc), f('M5 2.500h12.500v3h-3v12h-12v-3h3z') + m('M6 5.500h9'), f('M2.500 3.500h3v2h12v9h-12v3h-3z') + m('M5.500 5v10'),
    f('M2.500 6q4-5 8 0t7-1v9q-4 4-8 0t-7 2z'), f('M2.500 4q4 3 4.500 1t3 2 3-2 4.500-1v12q-4-3-4.500-1t-3-2-3 2-4.500 1z')],
  callouts: [f('M3.500 4.500h13v9h-5l-2 3-2-3h-4z'), f('M6 4.500h8l2.500 2.500v4.500l-2.500 2h-3l-2 3-1-3h-2l-2.500-2v-4.500z'), bubble,
    f('M6 12.500q-4 1-3.500-3-1-4 3-3 1-4 5-2 5-2 5 2 4 0 2 4 0 3-4 2-1 3-3 0-3 3-4.500 0z') + m('M4 15.500h2M2 17.500h1')]
    .concat(['M2 15l6-8', 'M2 15l2-5h4', 'M8 8.500H2.500v6l5 4'].map((p) => frameCall('M7.500 5.500h10v8h-10z', p)))
    .concat(['M2 15l7-8M7.500 4v10', 'M2 15l3-5h3M7.500 4v10', 'M8 8.500H2.500v6l5 4M7.500 4v10'].map((p) => frameCall('M8.500 5.500h9v8h-9z', p, q)))
    .concat(['M2 15l6-8', 'M2 15l2-5h4', 'M8 8.500H2.500v6l5 4'].map((p) => frameCall('M7.500 5.500h10v8h-10z', p, q)))
    .concat(['M2 15l5-6M7.500 4v10', 'M2 15l3-5h2M7.500 4v10', 'M6 8.500H2.500v6l5 4M6.500 4v10'].map((p) => frameCall('M9.500 5.500h8v9h-8z', p))),
  actions: [m('M14 6.500v7L6 10z'), m('M6 6.500v7l8-3.500z'), m('M14 6.500v7L8 10zM5.500 6v8'), m('M6 6.500v7l6-3.500zM14.500 6v8'), m('M4 10l6-5 6 5M5.500 10v5h9v-5M8.500 15v-4h3v4M13.500 7V4.500'),
    m(oval(5)) + l('M9 8.500h1.500v4M8.500 12.500h3M10 6v1'), m('M5 7.500v3q0 3 4 3t4-3v-3h-3v3H8v-3zM14 10l2-3'), m('M4 7.500h9v5H6v-3H4zM13 9.500h3v2h-3z'), w('M6.500 4.500h5l3 3v8h-8z') + m('M11.500 4.500v3h3'), m('M5 8.500h3l3-3v9l-3-3H5zM13 8l2-2M13 10h3M13 12l2 2'),
    m('M6.500 8.500v-1.500q0-2.500 3.500-2.500t3.500 2.500q0 2-3.500 3v3M8.500 8.500q0-2 1.500-2t1 2M9 14.500h2'), ''].map((x) => box + x)
};

document.querySelectorAll('.grid').forEach((grid) => {
  const name = grid.previousElementSibling.textContent;
  grid.innerHTML = sets[grid.dataset.set]
    .map((art, i) => `<button aria-label="${name} ${i + 1}"><svg viewBox="0 0 20 20">${art}</svg></button>`)
    .join('');
});
```
